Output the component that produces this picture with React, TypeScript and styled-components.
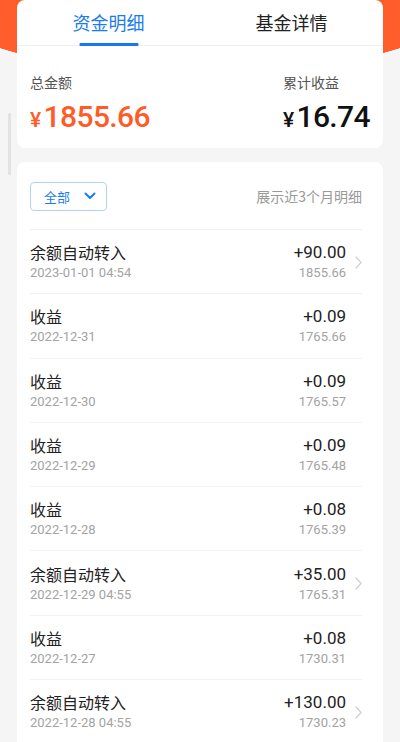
import React from "react";
import styled, { createGlobalStyle } from "styled-components";

const Global = createGlobalStyle`
  html, body { margin: 0; padding: 0; background: #f5f5f5; }
  body { font-family: "Roboto", "Noto Sans CJK SC", sans-serif; -webkit-font-smoothing: antialiased; }
  * { box-sizing: border-box; }
`;

const Page = styled.div`
  position: relative;
  min-height: 742px;
  padding: 0 17px 20px;
  background:
    radial-gradient(ellipse 264px 74px at 50% 0, #ff5e2c 99.5%, transparent 100%) no-repeat,
    #f5f5f5;
  overflow: hidden;
`;

const ScrollThumb = styled.div`
  position: absolute;
  left: 8px;
  top: 113px;
  width: 3px;
  height: 62px;
  border-radius: 2px;
  background: #e2e2e2;
`;

const Card = styled.div<{ $top?: boolean }>`
  background: #fff;
  border-radius: ${(p) => (p.$top ? "8px" : "8px 8px 0 0")};
`;

const Tabs = styled.div`
  display: grid;
  grid-template-columns: 1fr 1fr;
  height: 46px;
  border-bottom: 1px solid #f0f0f0;
`;

const Tab = styled.div<{ $active?: boolean }>`
  position: relative;
  display: flex;
  align-items: center;
  justify-content: center;
  font-family: "Noto Sans CJK SC", sans-serif;
  font-size: 18px;
  padding-bottom: 2px;
  color: ${(p) => (p.$active ? "#1b7cf2" : "#222")};
  &::after {
    content: "";
    display: ${(p) => (p.$active ? "block" : "none")};
    position: absolute;
    bottom: -1px;
    left: 50%;
    transform: translateX(-50%);
    width: 59px;
    height: 3px;
    border-radius: 1px;
    background: #1677f5;
  }
`;

const Summary = styled.div`
  display: flex;
  justify-content: space-between;
  padding: 26px 13px 13px;
`;

const SumCol = styled.div`
  display: flex;
  flex-direction: column;
  gap: 7px;
`;

const SumLabel = styled.div`
  font-family: "Noto Sans CJK SC", sans-serif;
  font-size: 14px;
  line-height: 20px;
  color: #555;
`;

const SumValue = styled.div<{ $orange?: boolean }>`
  display: flex;
  align-items: baseline;
  height: 36px;
  font-family: "Roboto", sans-serif;
  font-size: 30px;
  font-weight: 500;
  line-height: 36px;
  letter-spacing: -0.6px;
  color: ${(p) => (p.$orange ? "#ff5b27" : "#111")};
`;

const Yen = styled.span`
  font-size: 21px;
  font-weight: 500;
  margin-right: 3px;
`;

const ListCard = styled(Card)`
  margin-top: 14px;
  padding: 0 21px 0 13px;
`;

const FilterBar = styled.div`
  display: flex;
  align-items: center;
  justify-content: space-between;
  height: 67px;
  padding-top: 1px;
`;

const FilterButton = styled.div`
  display: flex;
  align-items: center;
  gap: 14px;
  width: 77px;
  height: 29px;
  padding-left: 13px;
  border: 1px solid #b2d2f7;
  border-radius: 4px;
  font-family: "Noto Sans CJK SC", sans-serif;
  font-size: 13px;
  color: #1b7cf2;
`;

const Hint = styled.div`
  font-family: "Noto Sans CJK SC", sans-serif;
  font-size: 14px;
  color: #999;
`;

const Row = styled.div`
  display: flex;
  align-items: center;
  height: 64.3px;
  border-top: 1px solid #f2f2f2;
`;

const Left = styled.div`
  flex: 1;
  display: flex;
  flex-direction: column;
`;

const Right = styled.div`
  display: flex;
  flex-direction: column;
  align-items: flex-end;
`;

const Title = styled.div`
  font-family: "Noto Sans CJK SC", sans-serif;
  font-size: 16px;
  line-height: 22px;
  color: #222;
`;

const Sub = styled.div`
  font-family: "Roboto", sans-serif;
  font-size: 13px;
  line-height: 19px;
  color: #a3a3a3;
`;

const Amount = styled.div`
  font-family: "Roboto", sans-serif;
  font-size: 17px;
  line-height: 22px;
  color: #222;
`;

const Chevron = styled.div`
  width: 16px;
  display: flex;
  justify-content: flex-end;
  padding-top: 1px;
`;

const ChevronIcon = () => (
  <svg width="7" height="13" viewBox="0 0 7 13" fill="none">
    <path d="M1 1l5 5.5L1 12" stroke="#cfcfcf" strokeWidth="1.2" strokeLinecap="round" strokeLinejoin="round" />
  </svg>
);

const DownIcon = () => (
  <svg width="12" height="8" viewBox="0 0 12 8" fill="none">
    <path d="M1.5 1.5L6 6l4.5-4.5" stroke="#1b7cf2" strokeWidth="2" strokeLinecap="round" strokeLinejoin="round" />
  </svg>
);

const rows = [
  { t: "余额自动转入", d: "2023-01-01 04:54", a: "+90.00", b: "1855.66", c: true },
  { t: "收益", d: "2022-12-31", a: "+0.09", b: "1765.66", c: false },
  { t: "收益", d: "2022-12-30", a: "+0.09", b: "1765.57", c: false },
  { t: "收益", d: "2022-12-29", a: "+0.09", b: "1765.48", c: false },
  { t: "收益", d: "2022-12-28", a: "+0.08", b: "1765.39", c: false },
  { t: "余额自动转入", d: "2022-12-29 04:55", a: "+35.00", b: "1765.31", c: true },
  { t: "收益", d: "2022-12-27", a: "+0.08", b: "1730.31", c: false },
  { t: "余额自动转入", d: "2022-12-28 04:55", a: "+130.00", b: "1730.23", c: true },
];

export default function App() {
  return (
    <>
      <Global />
      <Page>
        <Card $top>
          <Tabs>
            <Tab $active>资金明细</Tab>
            <Tab>基金详情</Tab>
          </Tabs>
          <Summary>
            <SumCol>
              <SumLabel>总金额</SumLabel>
              <SumValue $orange>
                <Yen>¥</Yen>1855.66
              </SumValue>
            </SumCol>
            <SumCol>
              <SumLabel>累计收益</SumLabel>
              <SumValue>
                <Yen>¥</Yen>16.74
              </SumValue>
            </SumCol>
          </Summary>
        </Card>
        <ListCard>
          <FilterBar>
            <FilterButton>
              全部
              <DownIcon />
            </FilterButton>
            <Hint>展示近3个月明细</Hint>
          </FilterBar>
          {rows.map((r, i) => (
            <Row key={i}>
              <Left>
                <Title>{r.t}</Title>
                <Sub>{r.d}</Sub>
              </Left>
              <Right>
                <Amount>{r.a}</Amount>
                <Sub>{r.b}</Sub>
              </Right>
              <Chevron>{r.c && <ChevronIcon />}</Chevron>
            </Row>
          ))}
        </ListCard>
        <ScrollThumb />
      </Page>
    </>
  );
}
